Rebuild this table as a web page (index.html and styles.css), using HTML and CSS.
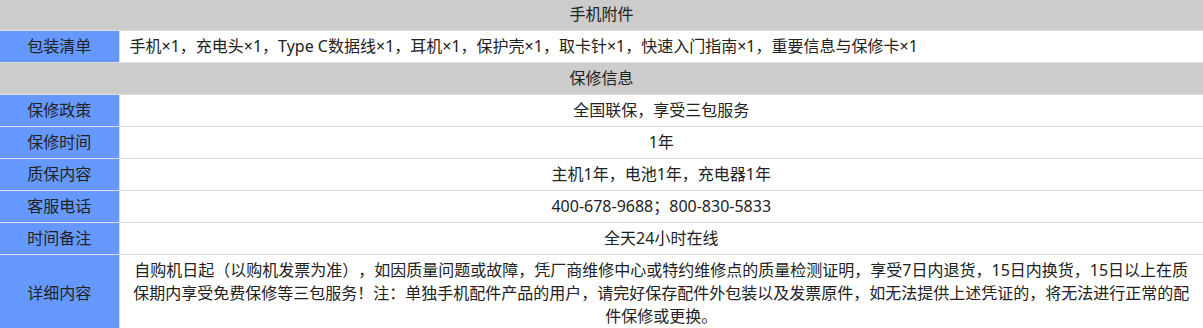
FILE: index.html
```html
<!DOCTYPE html>
<html lang="zh-CN">
<head>
<meta charset="utf-8">
<title>手机附件</title>
<link rel="stylesheet" href="styles.css">
</head>
<body>
<table class="spec">
  <colgroup>
    <col class="col-label">
    <col class="col-value">
  </colgroup>
  <tbody>
    <tr><th class="group first" colspan="2">手机附件</th></tr>
    <tr><td class="label">包装清单</td><td class="value left">手机×1，充电头×1，Type C数据线×1，耳机×1，保护壳×1，取卡针×1，快速入门指南×1，重要信息与保修卡×1</td></tr>
    <tr><th class="group" colspan="2">保修信息</th></tr>
    <tr><td class="label">保修政策</td><td class="value">全国联保，享受三包服务</td></tr>
    <tr><td class="label">保修时间</td><td class="value">1年</td></tr>
    <tr><td class="label">质保内容</td><td class="value">主机1年，电池1年，充电器1年</td></tr>
    <tr><td class="label">客服电话</td><td class="value">400-678-9688；800-830-5833</td></tr>
    <tr><td class="label">时间备注</td><td class="value">全天24小时在线</td></tr>
    <tr><td class="label">详细内容</td><td class="value">自购机日起（以购机发票为准），如因质量问题或故障，凭厂商维修中心或特约维修点的质量检测证明，享受7日内退货，15日内换货，15日以上在质保期内享受免费保修等三包服务！注：单独手机配件产品的用户，请完好保存配件外包装以及发票原件，如无法提供上述凭证的，将无法进行正常的配件保修或更换。</td></tr>
  </tbody>
</table>
</body>
</html>
```

FILE: styles.css
```css
html, body {
  margin: 0;
  padding: 0;
  background: #ffffff;
}

body {
  font-family: "Noto Sans", "Noto Sans CJK SC", sans-serif;
  font-size: 16px;
  color: #222222;
  text-spacing-trim: space-all;
}

.spec {
  width: 1203px;
  border-collapse: collapse;
  table-layout: fixed;
}

.col-label {
  width: 119px;
}

.spec th,
.spec td {
  border-bottom: 1px solid #dddddd;
  line-height: 23px;
  padding: 4px 10px;
  text-spacing-trim: space-all;
}

.group {
  background: #cccccc;
  font-weight: normal;
  text-align: center;
}

.group.first {
  padding: 3px 10px 4px;
}

.label {
  background: #6699ff;
  text-align: center;
  border-right: 1px solid #dddddd;
}

.value {
  text-align: center;
  background: #ffffff;
}

.value.left {
  text-align: left;
}
```
